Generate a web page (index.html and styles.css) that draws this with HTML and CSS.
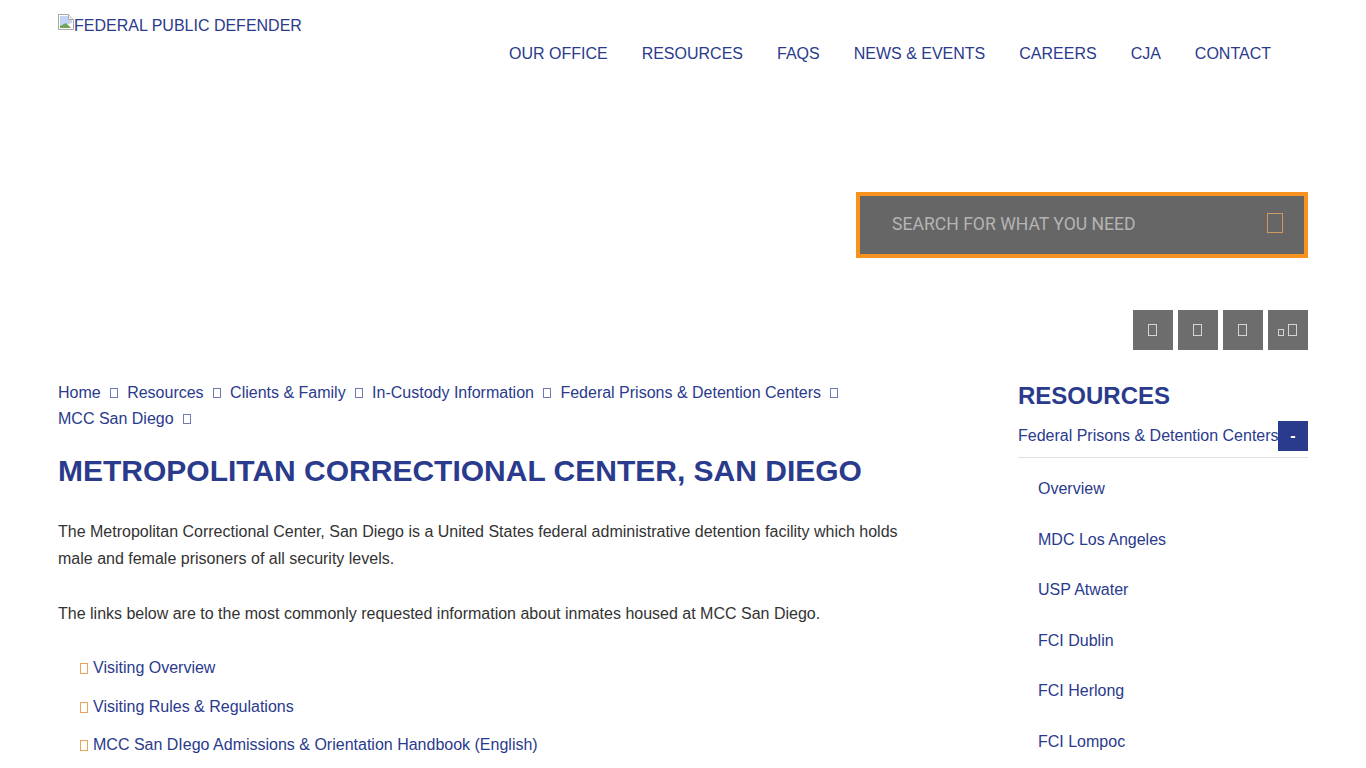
FILE: index.html
```html
<!DOCTYPE html>
<html>
<head>
	<meta charset="utf-8">
	<meta name="viewport" content="width=device-width">
	<title>Federal Public Defender | MCC San Diego</title>
	<link rel="stylesheet" href="styles.css">
</head>
<body>
	<header>
		<div class="container header-row">
			<a class="branding" href="#">
				<svg class="broken-img" width="16" height="16" viewBox="0 0 16 16">
					<path d="M0.5 0.5H10.5L15.5 5.5V15.5H0.5Z" fill="#fff" stroke="#a8a8a8"/>
					<path d="M10.5 0.5V5.5H15.5" fill="#eee" stroke="#a8a8a8"/>
					<path d="M2 2H10V6H14V9L2 12Z" fill="#c4d4f4"/>
					<path d="M2 14V12L8 9L13 14Z" fill="#6fa55a"/>
				</svg><span>FEDERAL PUBLIC DEFENDER</span>
			</a>
			<nav>
				<ul>
					<li><a href="#">OUR OFFICE</a></li>
					<li><a href="#">RESOURCES</a></li>
					<li><a href="#">FAQS</a></li>
					<li><a href="#">NEWS &amp; EVENTS</a></li>
					<li><a href="#">CAREERS</a></li>
					<li><a href="#">CJA</a></li>
					<li><a href="#">CONTACT</a></li>
				</ul>
			</nav>
		</div>
	</header>

	<section class="tools">
		<div class="container tools-col">
			<form class="search">
				<span class="search-text">SEARCH FOR WHAT YOU NEED</span>
				<i class="tofu tofu-search"></i>
			</form>
			<div class="social">
				<a href="#"><i class="tofu tofu-social"></i></a>
				<a href="#"><i class="tofu tofu-social"></i></a>
				<a href="#"><i class="tofu tofu-social"></i></a>
				<a href="#"><i class="tofu tofu-tiny"></i><i class="tofu tofu-social"></i></a>
			</div>
		</div>
	</section>

	<section class="page">
		<div class="container page-row">
			<main>
				<div class="crumbs">
					<a href="#">Home</a><i class="tofu tofu-crumb"></i>
					<a href="#">Resources</a><i class="tofu tofu-crumb"></i>
					<a href="#">Clients &amp; Family</a><i class="tofu tofu-crumb"></i>
					<a href="#">In-Custody Information</a><i class="tofu tofu-crumb"></i>
					<a href="#">Federal Prisons &amp; Detention Centers</a><i class="tofu tofu-crumb"></i>
					<a href="#">MCC San Diego</a><i class="tofu tofu-crumb"></i>
				</div>
				<h1>METROPOLITAN CORRECTIONAL CENTER, SAN DIEGO</h1>
				<p>The Metropolitan Correctional Center, San Diego is a United States federal administrative detention facility which holds male and female prisoners of all security levels.</p>
				<p>The links below are to the most commonly requested information about inmates housed at MCC San Diego.</p>
				<ul class="links">
					<li><i class="tofu tofu-link"></i><a href="#">Visiting Overview</a></li>
					<li><i class="tofu tofu-link"></i><a href="#">Visiting Rules &amp; Regulations</a></li>
					<li><i class="tofu tofu-link"></i><a href="#">MCC San DIego Admissions &amp; Orientation Handbook (English)</a></li>
				</ul>
			</main>
			<aside>
				<h2>RESOURCES</h2>
				<div class="side-head">
					<a href="#">Federal Prisons &amp; Detention Centers</a>
					<span class="toggle">-</span>
				</div>
				<ul class="side-list">
					<li><a href="#">Overview</a></li>
					<li><a href="#">MDC Los Angeles</a></li>
					<li><a href="#">USP Atwater</a></li>
					<li><a href="#">FCI Dublin</a></li>
					<li><a href="#">FCI Herlong</a></li>
					<li><a href="#">FCI Lompoc</a></li>
				</ul>
			</aside>
		</div>
	</section>
</body>
</html>
```

FILE: styles.css
```css
html{
	height: 768px;
	overflow: hidden;
}

body{
	font: 16px/26px "Liberation Sans", Arial, sans-serif;
	color: #333333;
	background: #ffffff;
	padding: 0;
	margin: 0;
}

a{
	color: #2a3a8c;
	text-decoration: none;
}

ul{
	margin: 0;
	padding: 0;
	list-style: none;
}

/* Global */
.container{
	width: 1250px;
	margin-left: 58px;
}

/* missing icon font glyphs */
.tofu{
	display: inline-block;
	box-sizing: border-box;
	border: 1px solid currentColor;
}

/* Header */
.header-row{
	display: flex;
	justify-content: space-between;
	height: 192px;
}

.branding{
	display: flex;
	align-items: flex-start;
	padding-top: 14px;
	height: 24px;
	line-height: 23px;
}

.broken-img{
	flex: none;
}

nav{
	padding: 41px 37px 0 0;
}

nav ul{
	display: flex;
	gap: 34px;
}

/* Search and social */
.tools-col{
	display: flex;
	flex-direction: column;
	align-items: flex-end;
}

.search{
	box-sizing: border-box;
	width: 452px;
	height: 66px;
	background: #666666;
	border: 4px solid #f7931e;
	padding: 0 21px 0 32px;
	display: flex;
	align-items: center;
	justify-content: space-between;
}

.search-text{
	font: 17.6px/26px Roboto, sans-serif;
	color: #b4b4b4;
	margin-top: -2px;
}

.tofu-search{
	width: 16px;
	height: 20px;
	color: #cf9a62;
	margin-top: -5px;
}

.social{
	display: flex;
	gap: 5px;
	margin-top: 52px;
}

.social a{
	width: 40px;
	height: 40px;
	background: #6d6d6d;
	color: #d4d4d4;
	display: flex;
	align-items: center;
	justify-content: center;
	gap: 4px;
}

.tofu-social{
	width: 9px;
	height: 12px;
	margin: -1px 1px 0 0;
}

.tofu-tiny{
	width: 6px;
	height: 7px;
	margin-top: 5px;
}

/* Main column */
.page{
	padding-top: 30px;
}

.page-row{
	display: flex;
	justify-content: space-between;
}

main{
	width: 860px;
}

.crumbs{
	width: 800px;
}

.crumbs a{
	margin-right: 9px;
}

.tofu-crumb{
	width: 8px;
	height: 10px;
	color: #6f7ab0;
	margin-right: 5px;
}

h1{
	font-size: 30px;
	line-height: 36px;
	color: #2a3a8c;
	margin: 21px 0 29px;
}

p{
	line-height: 27px;
	margin: 0 0 28px;
}

.links{
	padding-left: 22px;
}

.links li{
	height: 38.5px;
	line-height: 26px;
}

.tofu-link{
	width: 8px;
	height: 11px;
	color: #eba35c;
	margin-right: 5px;
	vertical-align: -1px;
}

/* Sidebar */
aside{
	width: 290px;
}

h2{
	font-size: 24px;
	line-height: 30px;
	color: #2a3a8c;
	margin: 1px 0 10px;
}

.side-head{
	position: relative;
	height: 36px;
	line-height: 30px;
	border-bottom: 1px solid #dfe0e6;
	white-space: nowrap;
}

.toggle{
	position: absolute;
	top: 0;
	right: 0;
	width: 30px;
	height: 30px;
	background: #2a3a8c;
	color: #ffffff;
	font-weight: bold;
	line-height: 30px;
	text-align: center;
}

.side-list{
	padding: 6px 0 0 20px;
}

.side-list li{
	height: 50.6px;
	line-height: 50px;
}
```
